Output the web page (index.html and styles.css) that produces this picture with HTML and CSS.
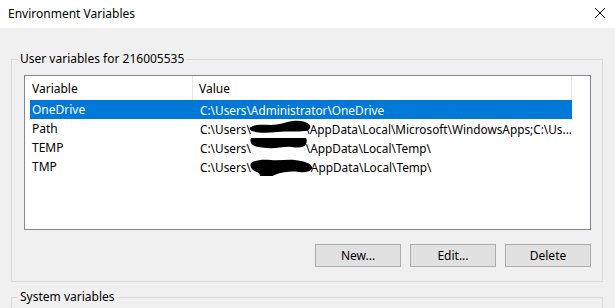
FILE: index.html
```html
<!DOCTYPE html>
<html lang="en">
<head>
    <meta charset="UTF-8">
    <meta name="viewport" content="width=device-width, initial-scale=1.0">
    <title>Environment Variables</title>
    <link rel="stylesheet" href="styles.css">
</head>
<body>
    <div class="titlebar">
        <span class="title">Environment Variables</span>
        <svg class="close" width="12" height="12" viewBox="0 0 12 12">
            <line x1="1" y1="1" x2="11" y2="11" stroke="#000" stroke-width="1"></line>
            <line x1="11" y1="1" x2="1" y2="11" stroke="#000" stroke-width="1"></line>
        </svg>
    </div>

    <div class="dialog">
        <fieldset class="group">
            <legend>User variables for 216005535</legend>
            <div class="listview">
                <div class="lv-header">
                    <div class="lv-col lv-col-name">Variable</div>
                    <div class="lv-col lv-col-value">Value</div>
                </div>
                <div class="lv-row selected">
                    <div class="lv-cell lv-cell-name">OneDrive</div>
                    <div class="lv-cell lv-cell-value">C:\Users\Administrator\OneDrive</div>
                </div>
                <div class="lv-row">
                    <div class="lv-cell lv-cell-name">Path</div>
                    <div class="lv-cell lv-cell-value">C:\Users\<span class="redact r1"><svg width="64" height="18" viewBox="0 0 64 18"><path d="M2 9 C6 6 14 7 22 7 C30 7 36 4 44 3 C50 2 56 3 60 6 C63 9 60 13 56 13 C48 14 38 13 28 14 C18 15 8 15 3 13 C0 12 0 10 2 9 Z" fill="#000"></path></svg></span>\AppData\Local\Microsoft\WindowsApps;C:\Us...</div>
                </div>
                <div class="lv-row">
                    <div class="lv-cell lv-cell-name">TEMP</div>
                    <div class="lv-cell lv-cell-value">C:\Users\<span class="redact r2"><svg width="62" height="20" viewBox="0 0 62 20"><path d="M3 12 C1 8 4 4 8 5 C12 6 14 3 20 3 C26 3 30 6 36 6 C42 6 46 2 52 3 C58 4 60 9 58 13 C56 17 50 17 44 16 C36 15 28 18 20 17 C12 16 5 16 3 12 Z" fill="#000"></path></svg></span>\AppData\Local\Temp\</div>
                </div>
                <div class="lv-row">
                    <div class="lv-cell lv-cell-name">TMP</div>
                    <div class="lv-cell lv-cell-value">C:\Users\<span class="redact r3"><svg width="66" height="24" viewBox="0 0 66 24"><path d="M2 6 C6 3 14 2 22 3 C30 4 38 2 46 3 C54 4 62 6 63 10 C64 14 58 16 50 15 C42 14 34 15 28 17 C22 19 18 23 14 22 C10 21 12 16 8 15 C4 14 0 10 2 6 Z" fill="#000"></path></svg></span>AppData\Local\Temp\</div>
                </div>
            </div>
            <div class="buttons">
                <button class="btn">New...</button>
                <button class="btn">Edit...</button>
                <button class="btn">Delete</button>
            </div>
        </fieldset>

        <fieldset class="group group-system">
            <legend>System variables</legend>
        </fieldset>
    </div>
</body>
</html>
```

FILE: styles.css
```css
html, body {
    height: 308px;
}

body {
    margin: 0;
    padding: 0;
    background-color: #f0f0f0;
    font-family: "Noto Sans", "Liberation Sans", sans-serif;
    font-size: 12px;
    color: #000;
    overflow: hidden;
}

.titlebar {
    display: flex;
    align-items: center;
    justify-content: space-between;
    height: 26px;
    padding: 0 9px 2px 8px;
    background-color: #fff;
}

.title {
    font-size: 12px;
}

.close {
    display: block;
}

.dialog {
    padding: 24px 12px 0 11px;
}

.group {
    margin: 0;
    padding: 9px 11px 14px 12px;
    border: 1px solid #dcdcdc;
}

.group legend {
    padding: 0 2px;
    margin-left: -6px;
    line-height: 14px;
}

.group-system {
    margin-top: 8px;
    height: 4px;
    padding-bottom: 0;
    border-bottom: none;
}

.listview {
    height: 153px;
    background-color: #fff;
    border: 1px solid #828790;
}

.lv-header {
    display: grid;
    grid-template-columns: 168px 379px;
    height: 24px;
}

.lv-col {
    display: flex;
    align-items: center;
    border-right: 1px solid #e5e5e5;
}

.lv-col-name {
    padding-left: 7px;
}

.lv-col-value {
    padding-left: 6px;
}

.lv-row {
    display: grid;
    grid-template-columns: 164px 378px;
    height: 19px;
    margin-left: 5px;
    width: 542px;
}

.lv-row.selected {
    background-color: #0078d7;
    color: #fff;
}

.lv-cell {
    display: flex;
    align-items: center;
    white-space: nowrap;
    overflow: hidden;
}

.lv-cell-name {
    padding-left: 2px;
}

.lv-cell-value {
    padding-left: 6px;
    font-size: 11.8px;
}

.redact {
    position: relative;
    display: inline-block;
    height: 12px;
}

.redact svg {
    position: absolute;
}

.r1 {
    width: 55px;
}

.r1 svg {
    left: -2px;
    top: -5px;
}

.r2 {
    width: 55px;
}

.r2 svg {
    left: -3px;
    top: -11px;
}

.r3 {
    width: 60px;
}

.r3 svg {
    left: -2px;
    top: -4px;
}

.buttons {
    display: flex;
    justify-content: flex-end;
    gap: 9px;
    margin-top: 14px;
}

.btn {
    width: 86px;
    height: 23px;
    padding: 0;
    background-color: #e1e1e1;
    border: 1px solid #adadad;
    font-family: inherit;
    font-size: 12px;
    color: #000;
}
```
